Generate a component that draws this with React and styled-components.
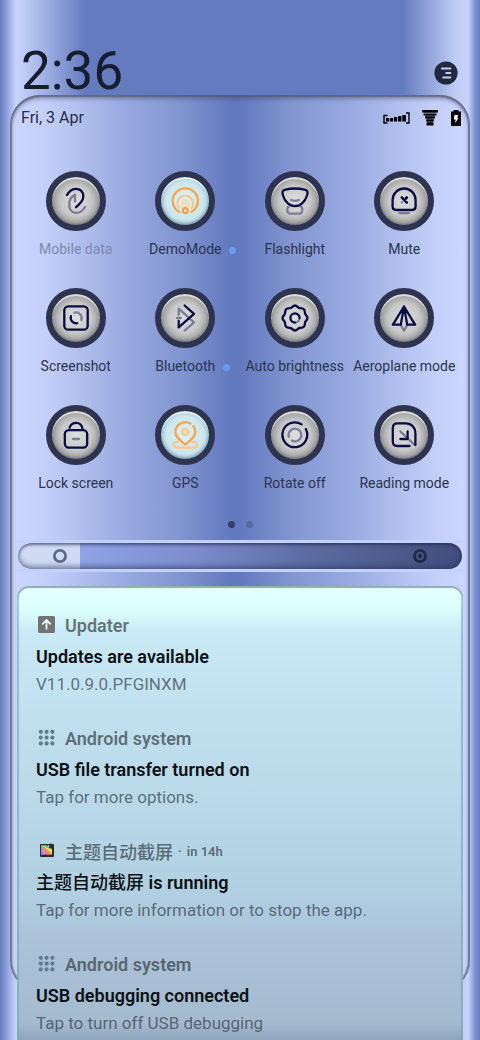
import React, { useState } from 'react';
import styled, { createGlobalStyle } from 'styled-components';

const navy = '#0b0b45';
const faded = '#7d7b99';
const orange = '#f9a350';
const peach = '#f8c795';

const MobileData = () => (
    <>
        <path d="M8.3 16V19.5C8.3 24 11 26.8 15 26.8C19 26.8 22 24.5 24 21M14 15.5V8.7C11 10.5 8.3 13 8.3 17" stroke={faded} />
        <path d="M6 9C8 5.5 10.5 3 14.5 2.8C19 2.6 22.3 5.5 22.3 10.5C22.3 15.5 19 17 15 21.3" stroke={navy} />
    </>
)

const DemoMode = () => (
    <>
        <circle cx="15.3" cy="18" r="5" fill="#e6e2c4" stroke="none" />
        <path d="M8.6 21.5A7.8 7.8 0 1 1 22 21.5" stroke={peach} />
        <path d="M11.2 19.5A4.5 4.5 0 0 1 19.4 19.5" stroke="#f3ddb8" />
        <path d="M9 25.8A12.6 12.6 0 1 1 21.6 25.8" stroke={orange} />
        <circle cx="15.3" cy="24.6" r="2.5" stroke={orange} />
    </>
)

const Flashlight = () => (
    <>
        <path d="M9 20.3C6.6 21 6.6 27.6 10 27.6H19.6C23 27.6 23 21 20.6 20.3" stroke={faded} />
        <path d="M11 14Q15 15.8 18.8 14" stroke={faded} />
        <path d="M4.5 3.8C11 2.2 19 2.2 25.5 3.8C28 4.4 27.8 7 27 9.5C25 16.4 20 20.2 15 20.2C10 20.2 5 16.4 3 9.5C2.2 7 2 4.4 4.5 3.8Z" stroke={navy} />
    </>
)

const Mute = () => (
    <>
        <path d="M3.6 20.5V14A11.5 11.5 0 0 1 26.6 14V20.5Q26.6 24 23 24H7.2Q3.6 24 3.6 20.5Z" stroke={navy} />
        <path d="M12.8 11.5L17.8 16.5M17.8 11.5L15.5 14" stroke={navy} strokeWidth="2.6" />
        <path d="M12.8 16.5H13" stroke={faded} />
        <path d="M10.4 27.2H19.8" stroke={faded} />
    </>
)

const Screenshot = () => (
    <>
        <rect x="3.3" y="3.3" width="23.4" height="23.4" rx="4" stroke={navy} />
        <path d="M9.9 13.2A5.6 5.6 0 0 0 16.2 20.2" stroke={navy} />
        <path d="M13.5 9.7A5.6 5.6 0 0 1 20.3 17" stroke={faded} />
    </>
)

const Bluetooth = () => (
    <>
        <path d="M8.7 11.8V5.7L24 19.3L14.6 27.6M7 15H10.8" stroke={faded} />
        <path d="M14.6 2.5L24 10.8L8.7 24.4V17.8" stroke={navy} />
    </>
)

const Brightness = () => (
    <>
        <path d="M15 2.5C17.3 2.5 17.7 4.8 19.6 5C21.3 5.2 22.6 4.9 23.8 6.2C25.1 7.4 24.8 8.7 25 10.4C25.2 12.3 27.5 12.7 27.5 15C27.5 17.3 25.2 17.7 25 19.6C24.8 21.3 25.1 22.6 23.8 23.8C22.6 25.1 21.3 24.8 19.6 25C17.7 25.2 17.3 27.5 15 27.5C12.7 27.5 12.3 25.2 10.4 25C8.7 24.8 7.4 25.1 6.2 23.8C4.9 22.6 5.2 21.3 5 19.6C4.8 17.7 2.5 17.3 2.5 15C2.5 12.7 4.8 12.3 5 10.4C5.2 8.7 4.9 7.4 6.2 6.2C7.4 4.9 8.7 5.2 10.4 5C12.3 4.8 12.7 2.5 15 2.5Z" stroke={navy} />
        <path d="M19.6 15A4.6 4.6 0 0 1 15 19.6" stroke={faded} />
        <path d="M15 19.6A4.6 4.6 0 1 1 19.6 15" stroke={navy} />
    </>
)

const Aeroplane = () => (
    <>
        <path d="M11.8 22L15 27.6L18.2 22" stroke={faded} />
        <path d="M15 3.5L3.9 21.7H11.8L15 3.5L18.2 21.7H26.1Z" stroke={navy} />
    </>
)

const Lock = () => (
    <>
        <rect x="3.8" y="10.2" width="22.4" height="17.4" rx="4" stroke={navy} />
        <path d="M8.6 7.6C9.6 4.4 12 2.8 15 2.8C18.6 2.8 21.4 5.4 21.6 9.5" stroke={navy} />
        <path d="M12 19H18" stroke={faded} />
    </>
)

const Gps = () => (
    <>
        <path d="M8.5 22H6.4C3 22 3 27.6 6.4 27.6H24.2C27.6 27.6 27.6 22 24.2 22H22.2" stroke={peach} />
        <circle cx="15.3" cy="12" r="3.2" stroke={peach} fill="#f3e3c2" />
        <path d="M20.4 3.6A10 10 0 0 0 5.3 12C5.3 17 10.5 20.8 15.3 24.5C20.1 20.8 25.3 17 25.3 12C25.3 9.6 24.5 7.8 23.4 6.2" stroke={orange} />
    </>
)

const Rotate = () => (
    <>
        <path d="M21.6 4.4A12.4 12.4 0 1 0 25.8 9" stroke={navy} />
        <path d="M8.8 16.6A6.4 6.4 0 1 1 12 20.6" stroke={faded} />
    </>
)

const Reading = () => (
    <>
        <path d="M11.3 11.3L25.6 24.8" stroke={faded} />
        <path d="M20.6 26H8.4Q3.8 26 3.8 21.4V8Q3.8 3.4 8.4 3.4H17C22.6 3.4 26.4 8 26.4 13V25" stroke={navy} />
        <path d="M11.4 19H18.6V11.4" stroke={navy} />
    </>
)

const tiles = [
    { name: 'Mobile data', icon: MobileData, muted: true },
    { name: 'DemoMode', icon: DemoMode, on: true, dot: true },
    { name: 'Flashlight', icon: Flashlight },
    { name: 'Mute', icon: Mute },
    { name: 'Screenshot', icon: Screenshot },
    { name: 'Bluetooth', icon: Bluetooth, dot: true },
    { name: 'Auto brightness', icon: Brightness },
    { name: 'Aeroplane mode', icon: Aeroplane },
    { name: 'Lock screen', icon: Lock },
    { name: 'GPS', icon: Gps, on: true },
    { name: 'Rotate off', icon: Rotate },
    { name: 'Reading mode', icon: Reading },
]

const UpdaterIcon = () => (
    <svg width="22" height="22" viewBox="0 0 22 22">
        <rect x="2" y="2" width="17" height="17" rx="1.5" fill="#737373" />
        <path d="M10.5 15.5V6.5M6.3 10.3L10.5 6L14.7 10.3" fill="none" stroke="#eefcff" strokeWidth="1.8" />
    </svg>
)

const SystemIcon = () => (
    <svg width="22" height="22" viewBox="0 0 22 22" fill="#607d8b">
        {[4.8, 10.6, 16.4].map(y => [4.8, 10.6, 16.4].map(x => (
            <circle key={x + '-' + y} cx={x} cy={y} r="2.1" />
        )))}
    </svg>
)

const CaptureIcon = () => (
    <svg width="22" height="22" viewBox="0 0 22 22">
        <rect x="4" y="4" width="14" height="13" rx="1" fill="#2c2a2c" />
        <path d="M5 5L16 14.5H5Z" fill="#f07ad8" />
        <path d="M5 5L16 9V14.5Z" fill="#f6e34a" />
        <path d="M5 5H10L16 10Z" fill="#53d07a" />
        <path d="M5 5L8 14.5H5Z" fill="#7a9bf2" />
        <path d="M5 5L16 14.5H11Z" fill="#f58a5a" />
        <circle cx="15" cy="5.6" r="2.2" fill="#2c2a2c" />
        <circle cx="12.4" cy="6.2" r="0.9" fill="#e8f6ff" />
    </svg>
)

const notices = [
    { app: 'Updater', icon: UpdaterIcon, title: 'Updates are available', text: 'V11.0.9.0.PFGINXM' },
    { app: 'Android system', icon: SystemIcon, title: 'USB file transfer turned on', text: 'Tap for more options.' },
    { han: '主题自动截屏', time: 'in 14h', icon: CaptureIcon, title: ' is running', text: 'Tap for more information or to stop the app.' },
    { app: 'Android system', icon: SystemIcon, title: 'USB debugging connected', text: 'Tap to turn off USB debugging' },
]

const App = () => {
    const [level, setLevel] = useState(14)
    return (
        <Shade>
            <GlobalStyle />
            <Top>
                <Clock>2:36</Clock>
                <MenuButton aria-label="Notification settings">
                    <svg width="24" height="24" viewBox="0 0 24 24">
                        <circle cx="12" cy="12" r="11.6" fill="#20293f" />
                        <path d="M7.8 7.5H16.4M12.2 12H16.4M9.2 16.5H16.4" fill="none" stroke="#c3cff5" strokeWidth="1.9" strokeLinecap="round" />
                    </svg>
                </MenuButton>
            </Top>
            <Panel>
                <Status>
                    <span>Fri, 3 Apr</span>
                    <StatusIcons>
                        <svg width="27" height="12" viewBox="0 0 27 12">
                            <path d="M4.5 3.5H1V11H4.5M23 1H26V11H23" fill="none" stroke="#000" strokeWidth="1.4" />
                            <path d="M3 6h3.2v3.4h-3.2zM7 6h3.2v3.6h-3.2zM11 5h3.2v4.6h-3.2zM15 4h3.4v5.6h-3.4zM19.3 3h3.6v6.6h-3.6z" />
                        </svg>
                        <svg width="16" height="16" viewBox="0 0 16 16">
                            <path d="M0 0h16v2.4h-16zM1.5 3.4h13v2.2h-13zM3 6.6h10v2h-10zM4 9.6h8v2h-8zM4.5 12.6h7v3h-7z" />
                            <path d="M2 1h12v2h-12zM3 5h10v2h-10zM4.5 8h7v2h-7zM5 11h6v2h-6z" opacity="0.5" />
                        </svg>
                        <svg width="12" height="16" viewBox="0 0 12 16">
                            <path d="M3.5 0h5v1.5h2.5v14.5h-10v-14.5h2.5z" />
                            <path d="M4.5 5H8L7.3 7.8H8.6L5.2 13L5.6 9.4H3.8Z" fill="#fff" />
                        </svg>
                    </StatusIcons>
                </Status>
                <Tiles>
                    {tiles.map(({ name, icon: Icon, on, dot, muted }) => (
                        <Tile key={name}>
                            <Disc $on={on}>
                                <svg width="30" height="30" viewBox="0 0 30 30" fill="none" strokeWidth="2.3" strokeLinecap="round" strokeLinejoin="round">
                                    <Icon />
                                </svg>
                            </Disc>
                            <Label $muted={muted}>
                                {name}
                                {dot && <Dot />}
                            </Label>
                        </Tile>
                    ))}
                </Tiles>
                <Pager>
                    <Page $current />
                    <Page />
                </Pager>
                <Brightbar>
                    <Range
                        type="range"
                        aria-label="Brightness"
                        value={level}
                        onChange={e => setLevel(Number(e.target.value))}
                        style={{ '--level': level + '%' }}
                    />
                    <RangeIcons viewBox="0 0 444 26" preserveAspectRatio="none">
                        <circle cx="42" cy="13" r="5.6" fill="none" stroke="#5f6b8c" strokeWidth="2.8" />
                        <circle cx="402" cy="13" r="5.5" fill="none" stroke="#202b4a" strokeWidth="3" />
                        <circle cx="402" cy="13" r="2.2" fill="#202b4a" />
                    </RangeIcons>
                </Brightbar>
                <Card>
                    {notices.map(({ app, han, time, icon: Icon, title, text }) => (
                        <Notice key={title}>
                            <NoticeHead>
                                <Icon />
                                <b>{app}{han && <Han>{han}</Han>}</b>
                                {time && <small>·</small>}
                                {time && <small>{time}</small>}
                            </NoticeHead>
                            <Title>{han && <Han>{han}</Han>}{title}</Title>
                            <Text>{text}</Text>
                        </Notice>
                    ))}
                </Card>
            </Panel>
        </Shade>
    )
}

export default App

const GlobalStyle = createGlobalStyle`
    *{
        box-sizing: border-box;
    }
    body{
        margin: 0;
        background: #657bbf;
        font-family: Roboto, "Noto Sans CJK SC", sans-serif;
    }
    button{
        border: 0;
        padding: 0;
        background: none;
        font: inherit;
        cursor: pointer;
    }
    svg{
        display: block;
        flex: none;
    }
`

const Shade = styled.div`
    min-height: 100vh;
    overflow: hidden;
    padding-bottom: 50px;
    background: linear-gradient(90deg, #667cc0 0, #8fa2dc 7px, #c8d4fc 16px, #bfccf6 24px, #657bbf 86px,
        #657bbf calc(100% - 78px), #bfccf6 calc(100% - 24px), #c8d4fc calc(100% - 12px), #7f93d2 calc(100% - 5px), #667cc0 100%);
`

const Top = styled.header`
    display: flex;
    align-items: flex-end;
    justify-content: space-between;
    height: 95px;
    padding: 0 21px;
`

const Clock = styled.div`
    font-size: 53px;
    line-height: 48px;
    color: #161d2e;
`

const MenuButton = styled.button`
    margin: 0 1px 10px 0;
`

const Panel = styled.main`
    display: flow-root;
    margin: 0 10px;
    padding: 0 7px;
    border-radius: 30px;
    background: linear-gradient(90deg, #ccd7ff 0, #c3cff9 8%, #96a8de 26%, #8497d2 36%, #6379be 48%, #6379be 50%, #8497d2 62%, #96a8de 73%, #c3cff9 92%, #ccd7ff 100%);
    box-shadow: inset 0 0 1px 2px rgba(88, 92, 112, 0.65), inset 0 2px 5px 1px rgba(60, 68, 104, 0.6);
`

const Status = styled.div`
    display: flex;
    align-items: center;
    justify-content: space-between;
    padding: 11px 1px 0 4px;
    font-size: 16px;
    line-height: 24px;
    color: #262f48;
`

const StatusIcons = styled.div`
    display: flex;
    align-items: center;
    gap: 12px;
`

const Tiles = styled.div`
    display: grid;
    grid-template-columns: repeat(4, 1fr);
    row-gap: 28px;
    padding: 41px 4px 0;
`

const Tile = styled.button`
    display: flex;
    flex-direction: column;
    align-items: center;
    gap: 7px;
`

const Disc = styled.span`
    display: flex;
    align-items: center;
    justify-content: center;
    width: 60px;
    height: 60px;
    border: 6px solid #2e3450;
    border-radius: 50%;
    background: ${p => p.$on
        ? 'radial-gradient(circle, #e2f2f0 0, #cbe6ee 55%, #a4c4d4 75%)'
        : 'radial-gradient(circle, #dedede 0, #c8c8c8 45%, #929292 75%)'};
    box-shadow: inset 0 2px 1px rgba(255, 255, 255, 0.7), inset 0 -1px 3px rgba(60, 70, 90, 0.5);
`

const Label = styled.span`
    position: relative;
    font-size: 14px;
    line-height: 22px;
    white-space: nowrap;
    color: ${p => p.$muted ? '#7c89b2' : '#2b3450'};
`

const Dot = styled.i`
    position: absolute;
    left: calc(100% + 8px);
    top: 9px;
    width: 7px;
    height: 7px;
    border-radius: 50%;
    background: #6b9af0;
`

const Pager = styled.div`
    display: flex;
    justify-content: center;
    gap: 11px;
    padding: 27px 0 12px;
`

const Page = styled.span`
    width: 7px;
    height: 7px;
    border-radius: 50%;
    background: ${p => p.$current ? '#343f66' : '#566a9f'};
`

const Brightbar = styled.div`
    position: relative;
    padding: 3px 1px;
    background: linear-gradient(#c2d2fb 0 3px, transparent 3px calc(100% - 3px), #c2d2fb calc(100% - 3px));
`

const Range = styled.input`
    display: block;
    appearance: none;
    width: 100%;
    height: 26px;
    margin: 0;
    border-radius: 13px;
    background:
        linear-gradient(90deg, #d0daf3 var(--level), transparent var(--level)),
        linear-gradient(90deg, #8fa3e6 14%, #7c8ccc 40%, #5c6ca2 65%, #414d7d 100%);
    box-shadow: inset 0 2px 3px rgba(30, 38, 74, 0.6), inset 0 -3px 5px rgba(40, 50, 90, 0.5);
    cursor: pointer;
    &::-webkit-slider-thumb{
        appearance: none;
        width: 26px;
        height: 26px;
    }
`

const RangeIcons = styled.svg`
    position: absolute;
    top: 3px;
    left: 1px;
    width: calc(100% - 2px);
    height: 26px;
    pointer-events: none;
`

const Card = styled.section`
    display: flex;
    flex-direction: column;
    gap: 28px;
    margin-top: 14px;
    margin-bottom: -50px;
    padding: 27px 19px 4px;
    border-radius: 12px 12px 0 0;
    background: linear-gradient(#e8ffff 0, #dbffff 24px, #cbeaf7 44px, #c6e5f3 80px, #b0cfe1 310px, #acc3d9 350px, #a4bacf calc(100% - 18px), #8ea4ba 100%);
    box-shadow: inset 0 2px 1px #8ab0b6, inset 2px 0 1px rgba(120, 165, 175, 0.6), inset -2px 0 1px rgba(120, 165, 175, 0.6);
`

const Notice = styled.article`
    display: flex;
    flex-direction: column;
`

const NoticeHead = styled.div`
    display: flex;
    align-items: center;
    height: 24px;
    margin-bottom: 7px;
    color: rgba(50, 60, 65, 0.7);
    b{
        margin-left: 7px;
        font-size: 18px;
        font-weight: 600;
    }
    small{
        margin-left: 5px;
        font-size: 13px;
        font-weight: 600;
    }
`

const Han = styled.span`
    font-weight: 500;
`

const Title = styled.div`
    font-size: 18px;
    font-weight: 600;
    line-height: 26px;
    color: #0c1114;
`

const Text = styled.div`
    font-size: 17px;
    line-height: 28px;
    color: rgba(50, 60, 70, 0.7);
`
